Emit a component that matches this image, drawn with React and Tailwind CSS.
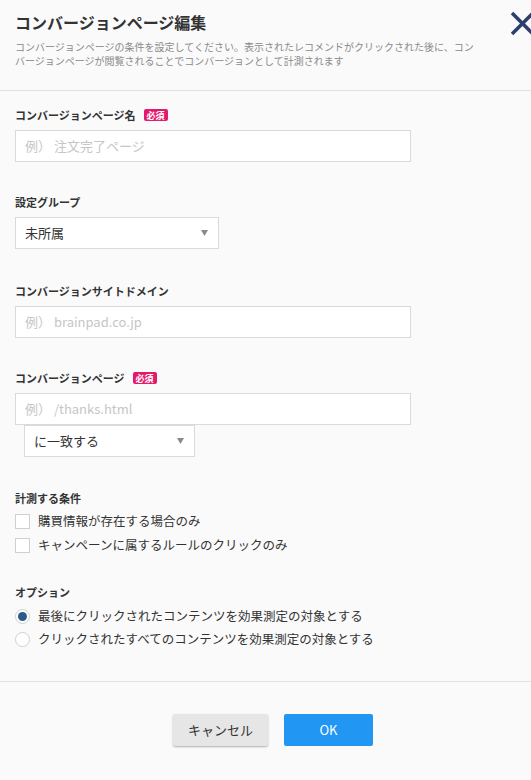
import React from "react";

const Badge = () => (
  <span className="ml-[8px] inline-flex h-[12px] items-center rounded-[2px] bg-[#e5196c] px-[3px] text-[9px] font-bold leading-none text-white">
    必須
  </span>
);

const Label = ({ children, required }) => (
  <div className="flex h-[16px] items-center text-[11px] font-bold text-[#333]">
    {children}
    {required && <Badge />}
  </div>
);

const Arrow = () => (
  <svg width="7" height="6" viewBox="0 0 7 6" className="shrink-0">
    <polygon points="0,0 7,0 3.5,6" fill="#8a8a8a" />
  </svg>
);

const TextInput = ({ placeholder }) => (
  <div className="mt-[7px] flex h-[32px] w-[396px] items-center border border-[#dadada] bg-white px-[9px] text-[13px] text-[#c6c6c6]">
    {placeholder}
  </div>
);

const Select = ({ value, width, className = "" }) => (
  <div
    className={`flex h-[32px] items-center justify-between border border-[#dadada] bg-white pl-[9px] pr-[10px] text-[13px] text-[#333] ${width} ${className}`}
  >
    <span>{value}</span>
    <Arrow />
  </div>
);

const Checkbox = ({ label }) => (
  <div className="flex h-[24px] items-center gap-[8px] text-[12.5px] text-[#333]">
    <span className="h-[15px] w-[15px] border border-[#d0d0d0] bg-white" />
    {label}
  </div>
);

const Radio = ({ label, checked }) => (
  <div className="flex h-[23px] items-center gap-[8px] text-[12.5px] text-[#333]">
    <span className="flex h-[15px] w-[15px] items-center justify-center rounded-full border border-[#d0d0d0] bg-white">
      {checked && <span className="h-[9px] w-[9px] rounded-full bg-[#2d5a8c]" />}
    </span>
    {label}
  </div>
);

export default function App() {
  return (
    <div
      className="relative h-[780px] w-[531px] overflow-hidden bg-[#fafafa]"
      style={{ fontFamily: '"Noto Sans CJK JP", "Noto Sans", sans-serif' }}
    >
      {/* Close */}
      <svg
        width="26"
        height="26"
        viewBox="0 0 26 26"
        className="absolute left-[509px] top-[10px]"
      >
        <line x1="3" y1="3" x2="24" y2="24" stroke="#2c3e6b" strokeWidth="3.6" />
        <line x1="24" y1="3" x2="3" y2="24" stroke="#2c3e6b" strokeWidth="3.6" />
      </svg>

      {/* Header */}
      <div className="border-b border-[#e2e2e2] px-[15px] pb-[22px] pt-[10px]">
        <h1 className="text-[16px] font-bold leading-[24px] text-[#333]">
          コンバージョンページ編集
        </h1>
        <p className="mt-[6px] text-[10px] leading-[14px] text-[#8a8a8a]">
          コンバージョンページの条件を設定してください。表示されたレコメンドがクリックされた後に、コン
          <br />
          バージョンページが閲覧されることでコンバージョンとして計測されます
        </p>
      </div>

      {/* Body */}
      <div className="px-[15px] pt-[16px]">
        <Label required>コンバージョンページ名</Label>
        <TextInput placeholder="例） 注文完了ページ" />

        <div className="mt-[32px]">
          <Label>設定グループ</Label>
          <Select value="未所属" width="w-[204px]" className="mt-[7px]" />
        </div>

        <div className="mt-[34px]">
          <Label>コンバージョンサイトドメイン</Label>
          <TextInput placeholder="例） brainpad.co.jp" />
        </div>

        <div className="mt-[32px]">
          <Label required>コンバージョンページ</Label>
          <TextInput placeholder="例） /thanks.html" />
          <Select value="に一致する" width="w-[171px]" className="ml-[9px]" />
        </div>

        <div className="mt-[33px]">
          <Label>計測する条件</Label>
          <div className="mt-[3px]">
            <Checkbox label="購買情報が存在する場合のみ" />
            <Checkbox label="キャンペーンに属するルールのクリックのみ" />
          </div>
        </div>

        <div className="mt-[27px]">
          <Label>オプション</Label>
          <div className="mt-[5px]">
            <Radio checked label="最後にクリックされたコンテンツを効果測定の対象とする" />
            <Radio label="クリックされたすべてのコンテンツを効果測定の対象とする" />
          </div>
        </div>
      </div>

      {/* Footer */}
      <div className="mt-[30px] border-t border-[#e2e2e2] pt-[32px]">
        <div className="flex justify-center gap-[16px] pl-[15px]">
          <button className="h-[32px] w-[95px] rounded-[2px] bg-[#e6e6e6] text-[13px] text-[#333] shadow-[0_1px_2px_rgba(0,0,0,0.3)]">
            キャンセル
          </button>
          <button className="h-[32px] w-[89px] rounded-[2px] bg-[#2196f3] text-[13px] text-white">
            OK
          </button>
        </div>
      </div>
    </div>
  );
}
